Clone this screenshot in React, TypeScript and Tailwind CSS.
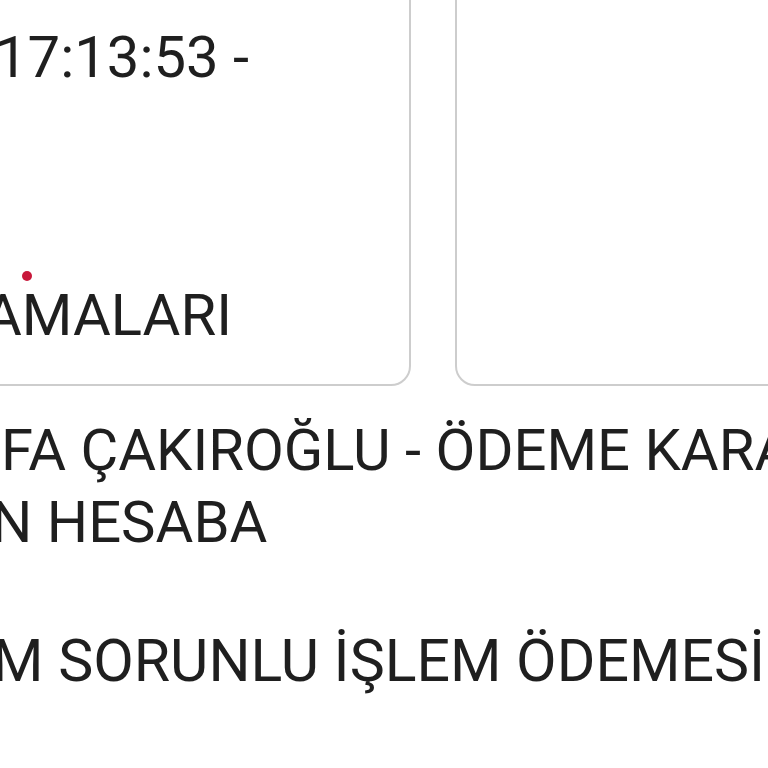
import React from "react";

export default function App() {
  return (
    <div
      className="relative w-[768px] h-[768px] overflow-hidden bg-white text-[#1f1f1f] text-[58px] leading-[72px]"
      style={{ fontFamily: "Roboto, 'Noto Sans', sans-serif" }}
    >
      <div className="flex gap-[44px] mt-[-100px]">
        <div className="relative shrink-0 ml-[-400px] w-[811px] h-[486px] rounded-[20px] border-[2.5px] border-[#cdcdcd] bg-white pl-[393px] pt-[119px] flex flex-col">
          <div className="whitespace-nowrap">17:13:53 -</div>
          <div className="relative mt-[186px] ml-[-11px] whitespace-nowrap">
            <span className="absolute left-[38px] top-[-8px] w-[10px] h-[10px] rounded-full bg-[#c8173a]" />
            AMALARI
          </div>
        </div>
        <div className="shrink-0 w-[600px] h-[486px] rounded-[20px] border-[2.5px] border-[#cdcdcd] bg-white" />
      </div>
      <div className="mt-[28px] flex flex-col">
        <div className="whitespace-nowrap ml-[1px]">FA ÇAKIROĞLU - ÖDEME KARARI</div>
        <div className="whitespace-nowrap ml-[-9px]">N HESABA</div>
        <div className="whitespace-nowrap ml-[-8px] mt-[67px] text-[59px]">M SORUNLU İŞLEM ÖDEMESİ</div>
      </div>
    </div>
  );
}
